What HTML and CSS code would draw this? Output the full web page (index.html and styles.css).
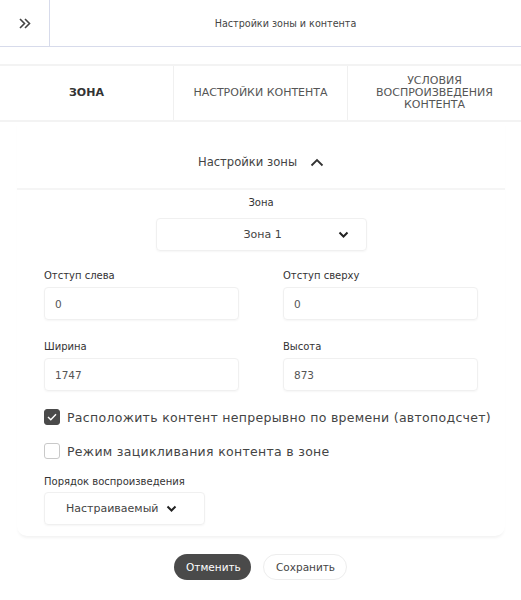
FILE: index.html
```html
<!DOCTYPE html>
<html lang="ru">
<head>
    <meta charset="UTF-8">
    <meta name="viewport" content="width=device-width, initial-scale=1.0">
    <title>Настройки зоны и контента</title>
    <link rel="stylesheet" href="styles.css">
</head>
<body>
    <div class="topbar">
        <div class="topbar-toggle">
            <svg width="12" height="11" viewBox="0 0 12 11"><path d="M1 1l4.5 4.5L1 10M6 1l4.5 4.5L6 10" fill="none" stroke="#444" stroke-width="1.6"/></svg>
        </div>
        <div class="topbar-title">Настройки зоны и контента</div>
    </div>

    <div class="tabs">
        <div class="tab active">Зона</div>
        <div class="tab">Настройки контента</div>
        <div class="tab">Условия воспроизведения контента</div>
    </div>

    <div class="card">
        <div class="card-head">
            <span>Настройки зоны</span>
            <svg width="14" height="9" viewBox="0 0 14 9"><path d="M1.5 7.5L7 2l5.5 5.5" fill="none" stroke="#333" stroke-width="1.8"/></svg>
        </div>

        <div class="zone-field">
            <div class="label">Зона</div>
            <div class="select select-zone">
                <span>Зона 1</span>
                <svg width="11" height="7" viewBox="0 0 11 7"><path d="M1.5 1.5l4 4 4-4" fill="none" stroke="#222" stroke-width="2"/></svg>
            </div>
        </div>

        <div class="grid">
            <div class="field">
                <div class="label">Отступ слева</div>
                <div class="input">0</div>
            </div>
            <div class="field">
                <div class="label">Отступ сверху</div>
                <div class="input">0</div>
            </div>
            <div class="field">
                <div class="label">Ширина</div>
                <div class="input">1747</div>
            </div>
            <div class="field">
                <div class="label">Высота</div>
                <div class="input">873</div>
            </div>
        </div>

        <div class="check checked">
            <span class="box"><svg width="10" height="8" viewBox="0 0 10 8"><path d="M1 4l2.8 2.8L9 1.2" fill="none" stroke="#fff" stroke-width="1.4"/></svg></span>
            Расположить контент непрерывно по времени (автоподсчет)
        </div>
        <div class="check">
            <span class="box"></span>
            Режим зацикливания контента в зоне
        </div>

        <div class="order">
            <div class="label">Порядок воспроизведения</div>
            <div class="select select-order">
                <span>Настраиваемый</span>
                <svg width="11" height="7" viewBox="0 0 11 7"><path d="M1.5 1.5l4 4 4-4" fill="none" stroke="#222" stroke-width="2"/></svg>
            </div>
        </div>
    </div>

    <div class="actions">
        <button class="btn btn-dark">Отменить</button>
        <button class="btn btn-light">Сохранить</button>
    </div>
</body>
</html>
```

FILE: styles.css
```css
html, body {
    margin: 0;
    background-color: #fff;
    font-family: "DejaVu Sans", sans-serif;
    color: #333;
}
.topbar {
    display: flex;
    height: 46px;
    border-bottom: 1px solid #d7dbeb;
}
.topbar-toggle {
    width: 50px;
    display: flex;
    justify-content: center;
    align-items: center;
    border-right: 1px solid #d7dbeb;
    box-sizing: border-box;
}
.topbar-title {
    flex: 1;
    display: flex;
    justify-content: center;
    align-items: center;
    font-size: 9.6px;
    color: #444;
}
.tabs {
    display: grid;
    grid-template-columns: 173px 174px 1fr;
    margin-top: 17px;
    height: 54px;
    border-top: 2px solid #f3f3f3;
    border-bottom: 2px solid #f3f3f3;
}
.tab {
    display: flex;
    justify-content: center;
    align-items: center;
    text-align: center;
    text-transform: uppercase;
    font-size: 11px;
    line-height: 12px;
    color: #555;
    padding: 0 18px;
}
.tab + .tab {
    border-left: 1px solid #f0f0f0;
}
.tab.active {
    color: #333;
    font-weight: bold;
}
.card {
    margin: 0 16px 0 17px;
    padding-bottom: 11px;
    border-radius: 0 0 10px 10px;
    box-shadow: 0 3px 3px -1px rgba(0, 0, 0, 0.05);
}
.card-head {
    height: 68px;
    box-sizing: border-box;
    padding-top: 14px;
    display: flex;
    justify-content: center;
    align-items: center;
    gap: 13px;
    font-size: 11.6px;
    color: #444;
    border-bottom: 2px solid #f5f5f5;
}
.label {
    font-size: 10px;
    color: #333;
    margin-bottom: 6px;
}
.zone-field {
    display: flex;
    flex-direction: column;
    align-items: center;
    padding-top: 7px;
}
.zone-field .label {
    margin-bottom: 10px;
}
.select {
    display: flex;
    align-items: center;
    height: 33px;
    box-sizing: border-box;
    border: 1px solid #f0f0f0;
    border-radius: 4px;
    box-shadow: 0 1px 2px rgba(0, 0, 0, 0.04);
    font-size: 11px;
    color: #444;
}
.select-zone {
    width: 211px;
    justify-content: space-between;
    padding: 0 17px 0 87px;
}
.grid {
    display: grid;
    grid-template-columns: 195px 195px;
    column-gap: 44px;
    row-gap: 21px;
    padding: 19px 0 0 27px;
}
.input {
    height: 33px;
    box-sizing: border-box;
    border: 1px solid #f0f0f0;
    border-radius: 4px;
    box-shadow: 0 1px 2px rgba(0, 0, 0, 0.04);
    padding: 0 10px;
    display: flex;
    align-items: center;
    font-size: 10.5px;
    color: #555;
}
.check {
    display: flex;
    align-items: center;
    gap: 7px;
    margin-left: 27px;
    font-size: 12.5px;
    color: #444;
    letter-spacing: 0.3px;
}
.grid + .check {
    margin-top: 18px;
}
.check + .check {
    margin-top: 18px;
}
.box {
    width: 16px;
    height: 16px;
    box-sizing: border-box;
    border: 1px solid #c9c9c9;
    border-radius: 3px;
    display: flex;
    justify-content: center;
    align-items: center;
}
.checked .box {
    background-color: #4a4a4a;
    border-color: #4a4a4a;
}
.order {
    margin: 17px 0 0 27px;
}
.order .label {
    margin-bottom: 5px;
}
.select-order {
    width: 161px;
    gap: 8px;
    padding-left: 21px;
}
.actions {
    display: flex;
    justify-content: center;
    gap: 12px;
    margin-top: 18px;
}
.btn {
    height: 26px;
    border-radius: 13px;
    font-family: inherit;
    font-size: 10.5px;
    padding: 0 12px;
    cursor: pointer;
}
.btn-dark {
    background-color: #4a4a4a;
    color: #fff;
    border: none;
    width: 77px;
}
.btn-light {
    background-color: #fff;
    color: #444;
    border: 1px solid #ededed;
    width: 84px;
}
```
